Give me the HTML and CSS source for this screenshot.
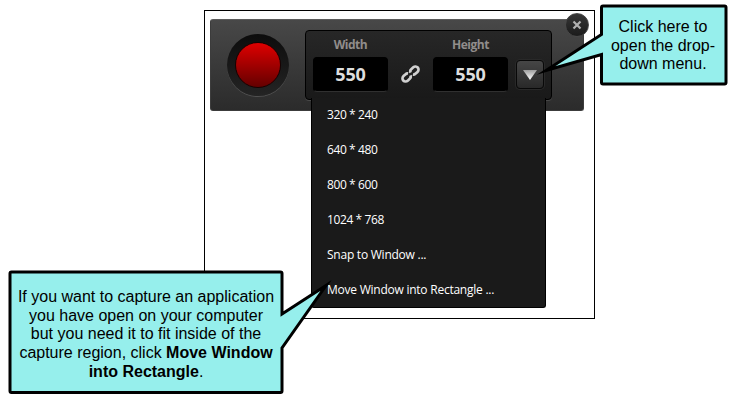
FILE: index.html
```
<!DOCTYPE html>
<html lang="en">
<head>
<meta charset="utf-8">
<title>Capture size menu</title>
<link rel="stylesheet" href="styles.css">
</head>
<body>
<main class="stage">
  <section class="frame">
    <div class="recorder">
      <button class="record" aria-label="Record"><span class="record-dot"></span></button>
      <div class="size-group">
        <label class="field"><span class="field-label">Width</span><span class="field-value">550</span></label>
        <svg class="link" width="20" height="20" viewBox="0 0 20 20" fill="none" stroke="#d0d0d0" stroke-width="2.7">
          <g transform="translate(9.5 10) rotate(-42)">
            <path d="M-1.4 -2A2.9 2.9 0 0 0 -3.8 -3.1H-6.6A3.1 3.1 0 0 0 -6.6 3.1H-3.8A3 3 0 0 0 -1 1"/>
            <path d="M1.4 2A2.9 2.9 0 0 0 3.8 3.1H6.6A3.1 3.1 0 0 0 6.6 -3.1H3.8A3 3 0 0 0 1 -1"/>
          </g>
        </svg>
        <label class="field"><span class="field-label">Height</span><span class="field-value">550</span></label>
        <button class="toggle" aria-label="Sizes">
          <svg width="16" height="12" viewBox="0 0 16 12">
            <defs><linearGradient id="arrow" x1="0" y1="0" x2="0" y2="1"><stop offset="0" stop-color="#9e9e9e"/><stop offset="1" stop-color="#fff"/></linearGradient></defs>
            <path d="M1 1H15L8 11Z" fill="url(#arrow)"/>
          </svg>
        </button>
      </div>
      <button class="close" aria-label="Close">
        <svg width="10" height="10" viewBox="0 0 10 10" stroke="#b0b0b0" stroke-width="2.2"><path d="M1.5 1.5L8.5 8.5M8.5 1.5L1.5 8.5"/></svg>
      </button>
      <ul class="menu">
        <li>320 * 240</li>
        <li>640 * 480</li>
        <li>800 * 600</li>
        <li>1024 * 768</li>
        <li class="words">Snap to Window ...</li>
        <li class="words">Move Window into Rectangle ...</li>
      </ul>
    </div>
  </section>

  <aside class="callout callout-move">
    <svg class="bubble" width="325" height="126" viewBox="0 0 325 126">
      <path d="M2 3.5Q2 2 3.5 2H272.5Q274 2 274 3.5V44L318 15.5L274 78V121Q274 122.5 272.5 122.5H3.5Q2 122.5 2 121Z"/>
    </svg>
    <p>If you want to capture an application<br>you have open on your computer<br>but you need it to fit inside of the<br>capture region, click <b>Move Window<br>into Rectangle</b>.</p>
  </aside>

  <aside class="callout callout-open">
    <svg class="bubble" width="192" height="84" viewBox="0 0 192 84">
      <path d="M65.5 3.5Q65.5 2 67 2H188.5Q190 2 190 3.5V78.5Q190 80 188.5 80H67Q65.5 80 65.5 78.5V50.5L10 66.5L65.5 30.5Z"/>
    </svg>
    <p>Click here to<br>open the drop-<br>down menu.</p>
  </aside>
</main>
</body>
</html>
```
FILE: styles.css
```
* { box-sizing: border-box; }
body { margin: 0; background: #fff; }
button { padding: 0; border: 0; }
p, ul { margin: 0; padding: 0; }

.stage {
  position: relative;
  width: 736px;
  height: 403px;
  padding: 10px 0 0 204px;
  overflow: hidden;
}
.frame {
  width: 391px;
  height: 309px;
  padding: 8px 5px;
  border: 1px solid #000;
}
.recorder {
  position: relative;
  display: flex;
  align-items: flex-start;
  width: 374px;
  height: 92px;
  padding-left: 16px;
  border: 1px solid #3c3c3c;
  border-top-color: #5c5c5c;
  border-radius: 3px;
  background: linear-gradient(#484848, #2b2b2b);
}
.record {
  display: flex;
  align-items: center;
  justify-content: center;
  width: 62px;
  height: 62px;
  margin-top: 14px;
  border-radius: 50%;
  background: linear-gradient(#0c0c0c, #242424);
  box-shadow: 0 1px 0 #505050;
}
.record-dot {
  width: 46px;
  height: 46px;
  border: 1px solid #180000;
  border-radius: 50%;
  background: linear-gradient(#df0000, #640000);
}
.size-group {
  display: flex;
  width: 247px;
  height: 70px;
  margin: 10px 0 0 16px;
  padding: 7px 7px 0;
  border: 1px solid #000;
  border-radius: 4px;
  background: linear-gradient(#272727, #191919);
  box-shadow: 0 1px 0 #484848;
}
.field { width: 75px; font-family: "Open Sans", "Noto Sans", sans-serif; text-align: center; }
.field-label {
  display: block;
  height: 19px;
  font-size: 12px;
  font-weight: 700;
  line-height: 13px;
  letter-spacing: -0.5px;
  color: #918d8b;
}
.field-value {
  display: block;
  height: 35px;
  border: 1px solid #000;
  border-bottom-color: #303030;
  border-radius: 4px;
  background: #000;
  font-size: 18px;
  font-weight: 700;
  line-height: 32px;
  letter-spacing: -0.2px;
  color: #dedede;
}
.link { margin: 26px 12px 0 13px; }
.toggle {
  display: flex;
  align-items: center;
  justify-content: center;
  width: 28px;
  height: 29px;
  margin: 22px 0 0 8px;
  border: 1px solid #080808;
  border-radius: 4px;
  background: linear-gradient(#464646, #292929);
  box-shadow: 0 0 0 1px #292929;
}
.close {
  position: absolute;
  top: -7px;
  right: -6px;
  display: flex;
  align-items: center;
  justify-content: center;
  width: 24px;
  height: 24px;
  border: 1px solid #484848;
  border-radius: 50%;
  background: linear-gradient(#363636, #1b1b1b);
}
.menu {
  position: absolute;
  top: 78px;
  left: 100px;
  width: 235px;
  height: 210px;
  padding-left: 15px;
  border: 1px solid #000;
  border-top: 0;
  border-radius: 0 0 3px 3px;
  background: #1a1a1a;
  list-style: none;
  font: 12px/33px "Open Sans", "Noto Sans", sans-serif;
  letter-spacing: -0.4px;
  color: #fff;
  white-space: nowrap;
}
.menu li { height: 35px; }
.menu .words { letter-spacing: -0.24px; }

.callout {
  position: absolute;
  font: 16px/18.7px "Liberation Sans", Arial, sans-serif;
  color: #000;
  text-align: center;
  white-space: nowrap;
}
.bubble {
  position: absolute;
  inset: 0;
  fill: #96efec;
  stroke: #000;
  stroke-width: 3;
  stroke-miterlimit: 10;
}
.callout p { position: relative; }
.callout-move { top: 270px; left: 8px; width: 325px; height: 126px; padding: 18px 49px 0 0; }
.callout-open { top: 4px; left: 536px; width: 192px; height: 84px; padding: 14px 0 0 62px; }
```
